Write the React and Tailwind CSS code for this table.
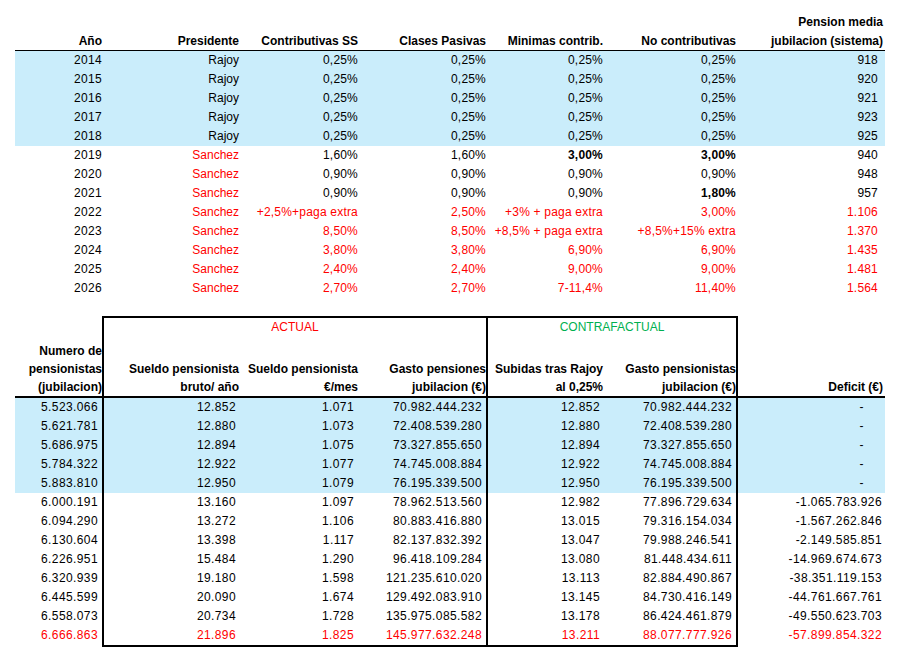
import React from 'react';

const cols = 'grid grid-cols-[89px_137px_119px_128px_117px_133px_147px] w-[870px] ml-[15px]';

const topRows = [
  { y: '2014', v: ['Rajoy', '0,25%', '0,25%', '0,25%', '0,25%', '918'], blue: true },
  { y: '2015', v: ['Rajoy', '0,25%', '0,25%', '0,25%', '0,25%', '920'], blue: true },
  { y: '2016', v: ['Rajoy', '0,25%', '0,25%', '0,25%', '0,25%', '921'], blue: true },
  { y: '2017', v: ['Rajoy', '0,25%', '0,25%', '0,25%', '0,25%', '923'], blue: true },
  { y: '2018', v: ['Rajoy', '0,25%', '0,25%', '0,25%', '0,25%', '925'], blue: true },
  { y: '2019', v: ['Sanchez', '1,60%', '1,60%', '3,00%', '3,00%', '940'], red: [0], bold: [3, 4] },
  { y: '2020', v: ['Sanchez', '0,90%', '0,90%', '0,90%', '0,90%', '948'], red: [0] },
  { y: '2021', v: ['Sanchez', '0,90%', '0,90%', '0,90%', '1,80%', '957'], red: [0], bold: [4] },
  { y: '2022', v: ['Sanchez', '+2,5%+paga extra', '2,50%', '+3% + paga extra', '3,00%', '1.106'], red: [0, 1, 2, 3, 4, 5] },
  { y: '2023', v: ['Sanchez', '8,50%', '8,50%', '+8,5% + paga extra', '+8,5%+15% extra', '1.370'], red: [0, 1, 2, 3, 4, 5] },
  { y: '2024', v: ['Sanchez', '3,80%', '3,80%', '6,90%', '6,90%', '1.435'], red: [0, 1, 2, 3, 4, 5] },
  { y: '2025', v: ['Sanchez', '2,40%', '2,40%', '9,00%', '9,00%', '1.481'], red: [0, 1, 2, 3, 4, 5] },
  { y: '2026', v: ['Sanchez', '2,70%', '2,70%', '7-11,4%', '11,40%', '1.564'], red: [0, 1, 2, 3, 4, 5] },
];

const bottomRows = [
  ['5.523.066', '12.852', '1.071', '70.982.444.232', '12.852', '70.982.444.232', '-'],
  ['5.621.781', '12.880', '1.073', '72.408.539.280', '12.880', '72.408.539.280', '-'],
  ['5.686.975', '12.894', '1.075', '73.327.855.650', '12.894', '73.327.855.650', '-'],
  ['5.784.322', '12.922', '1.077', '74.745.008.884', '12.922', '74.745.008.884', '-'],
  ['5.883.810', '12.950', '1.079', '76.195.339.500', '12.950', '76.195.339.500', '-'],
  ['6.000.191', '13.160', '1.097', '78.962.513.560', '12.982', '77.896.729.634', '-1.065.783.926'],
  ['6.094.290', '13.272', '1.106', '80.883.416.880', '13.015', '79.316.154.034', '-1.567.262.846'],
  ['6.130.604', '13.398', '1.117', '82.137.832.392', '13.047', '79.988.246.541', '-2.149.585.851'],
  ['6.226.951', '15.484', '1.290', '96.418.109.284', '13.080', '81.448.434.611', '-14.969.674.673'],
  ['6.320.939', '19.180', '1.598', '121.235.610.020', '13.113', '82.884.490.867', '-38.351.119.153'],
  ['6.445.599', '20.090', '1.674', '129.492.083.910', '13.145', '84.730.416.149', '-44.761.667.761'],
  ['6.558.073', '20.734', '1.728', '135.975.085.582', '13.178', '86.424.461.879', '-49.550.623.703'],
  ['6.666.863', '21.896', '1.825', '145.977.632.248', '13.211', '88.077.777.926', '-57.899.854.322'],
];

const topHead = [
  ['Año'],
  ['Presidente'],
  ['Contributivas SS'],
  ['Clases Pasivas'],
  ['Minimas contrib.'],
  ['No contributivas'],
  ['Pension media', 'jubilacion (sistema)'],
];

const bottomHead = [
  ['Numero de', 'pensionistas', '(jubilacion)'],
  ['Sueldo pensionista', 'bruto/ año'],
  ['Sueldo pensionista', '€/mes'],
  ['Gasto pensiones', 'jubilacion (€)'],
  ['Subidas tras Rajoy', 'al 0,25%'],
  ['Gasto pensionistas', 'jubilacion (€)'],
  ['Deficit (€)'],
];

// right padding + box borders for the lower table
const headPad = ['pr-0 border-r-2', 'pr-[2px]', 'pr-[2px]', 'pr-0 border-r-2', 'pr-[2px]', 'pr-0 border-r-2', 'pr-[2px]'];
const dataPad = ['pr-[4px] border-r-2', 'pr-[5px]', 'pr-[6px]', 'pr-[4px] border-r-2', 'pr-[5px]', 'pr-[4px] border-r-2', 'pr-[3px]'];

function TopTable() {
  return (
    <div className={cols + ' pt-[13px]'}>
      {topHead.map((h, i) => (
        <div key={i} className="h-[38px] flex flex-col justify-end border-b border-black text-right pr-[2px] font-bold leading-[18.5px]">
          {h.map((l) => (
            <span key={l} className="whitespace-nowrap">{l}</span>
          ))}
        </div>
      ))}
      {topRows.map((r) => {
        const bg = r.blue ? 'bg-[#caedfb]' : '';
        return (
          <React.Fragment key={r.y}>
            <div className={`${bg} text-right pr-[2px] leading-[19px] tracking-[0.3px]`}>{r.y}</div>
            {r.v.map((c, j) => {
              const red = r.red && r.red.includes(j) ? 'text-[#ff0000]' : 'text-black';
              const bold = r.bold && r.bold.includes(j) ? 'font-bold' : '';
              const pad = j === 5 ? 'pr-[7px]' : 'pr-[2px]';
              const track = j === 0 ? '' : 'tracking-[0.2px]';
              return (
                <div key={j} className={`${bg} ${red} ${bold} ${pad} ${track} text-right leading-[19px] whitespace-nowrap`}>
                  {c}
                </div>
              );
            })}
          </React.Fragment>
        );
      })}
    </div>
  );
}

function BottomTable() {
  return (
    <div className={cols + ' mt-[18px]'}>
      {/* group titles */}
      <div className="border-r-2 border-black" />
      <div className="col-span-3 border-t-2 border-r-2 border-black text-center leading-[19px] text-[#ff0000]">ACTUAL</div>
      <div className="col-span-2 border-t-2 border-r-2 border-black text-center leading-[19px] text-[#00b050]">CONTRAFACTUAL</div>
      <div />

      {bottomHead.map((h, i) => (
        <div key={i} className={`h-[61px] flex flex-col justify-end border-b-2 border-black text-right font-bold leading-[18px] ${headPad[i]}`}>
          {h.map((l) => (
            <span key={l} className="whitespace-nowrap">{l}</span>
          ))}
        </div>
      ))}

      {bottomRows.map((r, i) => {
        const bg = i < 5 ? 'bg-[#caedfb]' : '';
        const last = i === bottomRows.length - 1;
        const color = last ? 'text-[#ff0000]' : 'text-black';
        return (
          <React.Fragment key={i}>
            {r.map((c, j) => {
              const bottom = last && j >= 1 && j <= 5 ? 'border-b-2' : '';
              const pad = c === '-' ? 'pr-[21px]' : dataPad[j];
              return (
                <div key={j} className={`${bg} ${color} ${bottom} ${pad} border-black text-right leading-[19px] tracking-[0.4px] whitespace-nowrap`}>
                  {c}
                </div>
              );
            })}
          </React.Fragment>
        );
      })}
    </div>
  );
}

export default function App() {
  return (
    <div className="w-[902px] h-[657px] bg-white text-black text-[12px] font-['Liberation_Sans',Arial,sans-serif]">
      <TopTable />
      <BottomTable />
    </div>
  );
}
